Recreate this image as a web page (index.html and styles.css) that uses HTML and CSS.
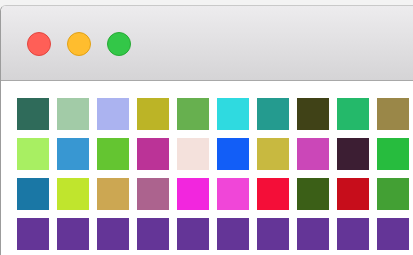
FILE: index.html
```html
<!DOCTYPE html>
<html>
<head>
<meta charset="utf-8">
<link rel="stylesheet" href="styles.css">
</head>
<body>
<div class="page">
  <div class="window">
    <div class="titlebar">
      <span class="light close"></span>
      <span class="light minimize"></span>
      <span class="light zoom"></span>
    </div>
    <div class="grid">
      <div class="sw" style="background:#2f6b5a"></div>
      <div class="sw" style="background:#a2cba7"></div>
      <div class="sw" style="background:#abb3f0"></div>
      <div class="sw" style="background:#bcb426"></div>
      <div class="sw" style="background:#67b04f"></div>
      <div class="sw" style="background:#2fdae0"></div>
      <div class="sw" style="background:#249b8f"></div>
      <div class="sw" style="background:#404217"></div>
      <div class="sw" style="background:#24b96a"></div>
      <div class="sw" style="background:#9a8748"></div>

      <div class="sw" style="background:#a8ef62"></div>
      <div class="sw" style="background:#3897d2"></div>
      <div class="sw" style="background:#64c531"></div>
      <div class="sw" style="background:#bb3397"></div>
      <div class="sw" style="background:#f4e1dc"></div>
      <div class="sw" style="background:#125ef7"></div>
      <div class="sw" style="background:#c8b940"></div>
      <div class="sw" style="background:#cb47b8"></div>
      <div class="sw" style="background:#3c1e33"></div>
      <div class="sw" style="background:#27bc3e"></div>

      <div class="sw" style="background:#1a77a5"></div>
      <div class="sw" style="background:#c0e52d"></div>
      <div class="sw" style="background:#cca752"></div>
      <div class="sw" style="background:#ac638e"></div>
      <div class="sw" style="background:#f226de"></div>
      <div class="sw" style="background:#f046d8"></div>
      <div class="sw" style="background:#f40e38"></div>
      <div class="sw" style="background:#3b5f17"></div>
      <div class="sw" style="background:#c70d1b"></div>
      <div class="sw" style="background:#43a034"></div>

      <div class="sw" style="background:#643597"></div>
      <div class="sw" style="background:#643597"></div>
      <div class="sw" style="background:#643597"></div>
      <div class="sw" style="background:#643597"></div>
      <div class="sw" style="background:#643597"></div>
      <div class="sw" style="background:#643597"></div>
      <div class="sw" style="background:#643597"></div>
      <div class="sw" style="background:#643597"></div>
      <div class="sw" style="background:#643597"></div>
      <div class="sw" style="background:#643597"></div>
    </div>
  </div>
</div>
</body>
</html>
```

FILE: styles.css
```css
html, body {
  margin: 0;
  padding: 0;
  background: #f3f3f3;
  overflow: hidden;
}
.page {
  width: 413px;
  height: 255px;
  padding-top: 5px;
  box-sizing: border-box;
  overflow: hidden;
}
.window {
  width: 460px;
  height: 300px;
  background: #ffffff;
  border-top: 1px solid #c9c9c9;
  border-left: 1px solid #9c9c9c;
  border-radius: 6px 0 0 0;
  overflow: hidden;
}
.titlebar {
  height: 72px;
  padding-top: 2px;
  padding-left: 26px;
  display: flex;
  align-items: center;
  gap: 16px;
  background: linear-gradient(#edecee, #d5d4d6);
  border-bottom: 1px solid #a8a8a8;
}
.light {
  width: 24px;
  height: 24px;
  border-radius: 50%;
  box-sizing: border-box;
  display: block;
}
.close { background: #ff5f57; border: 1px solid #e2463f; }
.minimize { background: #ffbd2e; border: 1px solid #e1a116; }
.zoom { background: #33c748; border: 1px solid #27aa35; }
.grid {
  display: grid;
  grid-template-columns: repeat(10, 32px);
  grid-auto-rows: 32px;
  gap: 8px;
  padding: 17px 0 0 16px;
}
.sw {
  width: 32px;
  height: 32px;
}
```
